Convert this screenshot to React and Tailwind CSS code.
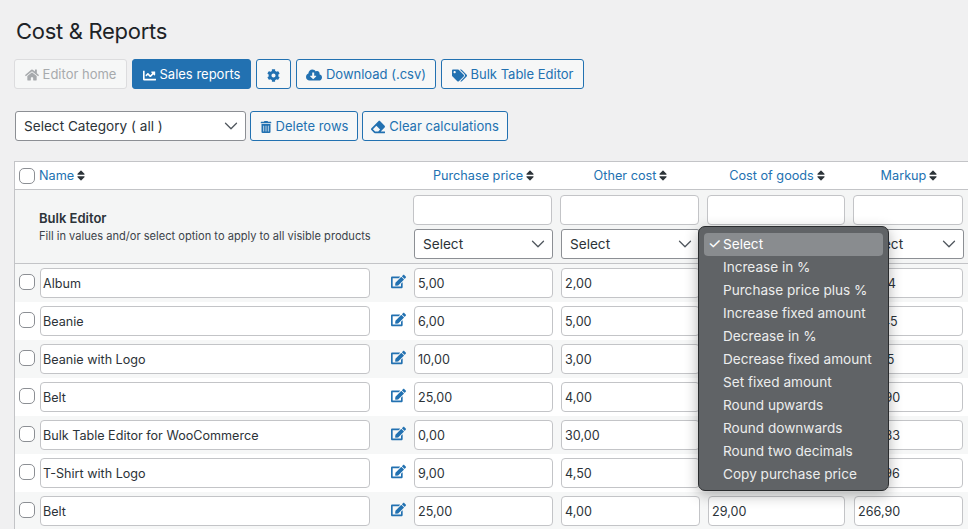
import { FaHome, FaChartLine, FaCog, FaCloudDownloadAlt, FaTags, FaTrashAlt, FaEraser, FaSort, FaEdit } from 'react-icons/fa';
import { ChevronDown } from 'lucide-react';

const rows = [
  ['Album', '5,00', '2,00', '7,00', '121,44'],
  ['Beanie', '6,00', '5,00', '11,00', '136,45'],
  ['Beanie with Logo', '10,00', '3,00', '13,00', '115,25'],
  ['Belt', '25,00', '4,00', '29,00', '266,90'],
  ['Bulk Table Editor for WooCommerce', '0,00', '30,00', '30,00', '200,33'],
  ['T-Shirt with Logo', '9,00', '4,50', '13,50', '226,96'],
  ['Belt', '25,00', '4,00', '29,00', '266,90'],
];

const options = [
  'Increase in %',
  'Purchase price plus %',
  'Increase fixed amount',
  'Decrease in %',
  'Decrease fixed amount',
  'Set fixed amount',
  'Round upwards',
  'Round downwards',
  'Round two decimals',
  'Copy purchase price',
];

const cols = 'grid grid-cols-[25px_330px_40px_139px_8px_139px_8px_138px_8px_110px]';

const OutlineButton = ({ children, className = '' }) => (
  <button className={`h-[30px] pt-[2px] flex items-center justify-center gap-[4px] border border-[#2271b1] rounded-[3px] bg-[#f6f7f7] text-[#2271b1] text-[13px] whitespace-nowrap ${className}`}>
    {children}
  </button>
);

const Checkbox = () => (
  <span className="block w-4 h-4 mb-[2px] bg-white border border-[#8c8f94] rounded-[5px]" />
);

const TextBox = ({ value, className = '' }) => (
  <div className={`h-[30px] pt-[2px] flex items-center bg-white border border-[#c3c4c7] rounded-[4px] text-[12.6px] text-[#2c3338] ${className}`}>
    {value}
  </div>
);

const SelectBox = ({ value, className = '' }) => (
  <div className={`h-[30px] flex items-center justify-between pl-2 pr-[3px] bg-white border border-[#8c8f94] rounded-[3px] text-[13.6px] text-[#2c3338] ${className}`}>
    <span className="whitespace-nowrap">{value}</span>
    <ChevronDown size={22} strokeWidth={1.4} className="text-[#50575e]" />
  </div>
);

const SortLabel = ({ label, className = '' }) => (
  <div className={`flex items-center gap-[3px] text-[12.7px] text-[#2271b1] ${className}`}>
    {label}
    <FaSort className="w-2 h-[13px] text-[#2c3338]" />
  </div>
);

export default function App() {
  return (
    <div className="relative w-[968px] h-[529px] overflow-hidden bg-[#f0f0f1] font-['Inter',sans-serif] text-[#1d2327]">
      <div className="pl-[16px] pt-[17px]">
        <h1 className="text-[22px] leading-[28px] font-normal tracking-[-0.3px]">Cost &amp; Reports</h1>
      </div>

      <div className="flex gap-[5px] pl-[14px] mt-[14px]">
        <button className="w-[113px] h-[30px] pt-[2px] flex items-center justify-center gap-[4px] border border-[#dcdcde] rounded-[3px] bg-[#f6f7f7] text-[#a7aaad] text-[13px]">
          <FaHome size={14} /> Editor home
        </button>
        <button className="w-[119px] h-[30px] pt-[2px] flex items-center justify-center gap-[4px] border border-[#2271b1] rounded-[3px] bg-[#2271b1] text-white text-[13px]">
          <FaChartLine size={13} /> Sales reports
        </button>
        <OutlineButton className="w-[35px]"><FaCog size={13} /></OutlineButton>
        <OutlineButton className="w-[140px]"><FaCloudDownloadAlt size={16} /> Download (.csv)</OutlineButton>
        <OutlineButton className="w-[143px]"><FaTags size={15} /> Bulk Table Editor</OutlineButton>
      </div>

      <div className="flex gap-[4px] pl-[15px] mt-[22px]">
        <SelectBox value="Select Category ( all )" className="w-[231px]" />
        <OutlineButton className="w-[108px]"><FaTrashAlt size={12} /> Delete rows</OutlineButton>
        <OutlineButton className="w-[146px]"><FaEraser size={14} /> Clear calculations</OutlineButton>
      </div>

      <div className="ml-[14px] mt-[20px] w-[970px] border border-[#c3c4c7] bg-white">
        <div className={`${cols} h-[27px] items-center pl-[4px]`}>
          <div className="pt-[2px]"><Checkbox /></div>
          <SortLabel label="Name" className="-ml-[5px]" />
          <div />
          <SortLabel label="Purchase price" className="justify-center" />
          <div />
          <SortLabel label="Other cost" className="justify-center" />
          <div />
          <SortLabel label="Cost of goods" className="justify-center" />
          <div />
          <SortLabel label="Markup" className="justify-center" />
        </div>

        <div className={`${cols} h-[75px] items-start pl-[4px] bg-[#f4f5f5] border-y border-[#c3c4c7]`}>
          <div />
          <div className="col-span-2 -ml-[5px] pt-[20px]">
            <div className="text-[13px] leading-[16px] font-semibold text-[#2c3338]">Bulk Editor</div>
            <div className="mt-[1px] text-[11.1px] leading-[18px] text-[#3c434a] whitespace-nowrap">
              Fill in values and/or select option to apply to all visible products
            </div>
          </div>
          {[0, 1, 2, 3].map((i) => (
            <div key={i} className={`pt-[5px] flex flex-col gap-[4px] ${i === 0 ? 'col-start-4' : i === 1 ? 'col-start-6' : i === 2 ? 'col-start-8' : 'col-start-10'}`}>
              <TextBox value="" className="-ml-px mr-px" />
              <SelectBox value="Select" />
            </div>
          ))}
        </div>

        {rows.map((row, i) => (
          <div key={i} className={`${cols} h-[38px] items-center pl-[4px] ${i % 2 === 0 ? 'bg-[#f6f7f7]' : 'bg-white'}`}>
            <Checkbox />
            <TextBox value={row[0]} className="-ml-[4px] w-[330px] px-[2px]" />
            <div className="flex justify-end pr-[8px] pb-[3px]">
              <FaEdit size={15} className="text-[#2271b1]" />
            </div>
            <TextBox value={row[1]} className="px-[3px]" />
            <div />
            <TextBox value={row[2]} className="px-[3px]" />
            <div />
            <TextBox value={row[3]} className="px-[3px] mr-px" />
            <div />
            <TextBox value={row[4]} className="px-[3px] mr-px" />
          </div>
        ))}
      </div>

      <div className="absolute left-[698px] top-[226px] w-[191px] h-[265px] px-[5px] pt-[6px] bg-[#606366] border border-[#2a2c2e] rounded-[7px] shadow-[0_4px_14px_rgba(0,0,0,0.3)] text-[13.6px] text-[#eceded]">
        <div className="h-[23px] flex items-center rounded-[4px] bg-[#898c8f] text-white">
          <span className="w-[19px] pl-[4px] text-[15px]">✓</span>Select
        </div>
        {options.map((o) => (
          <div key={o} className="h-[23px] flex items-center pl-[19px] whitespace-nowrap">{o}</div>
        ))}
      </div>
    </div>
  );
}
